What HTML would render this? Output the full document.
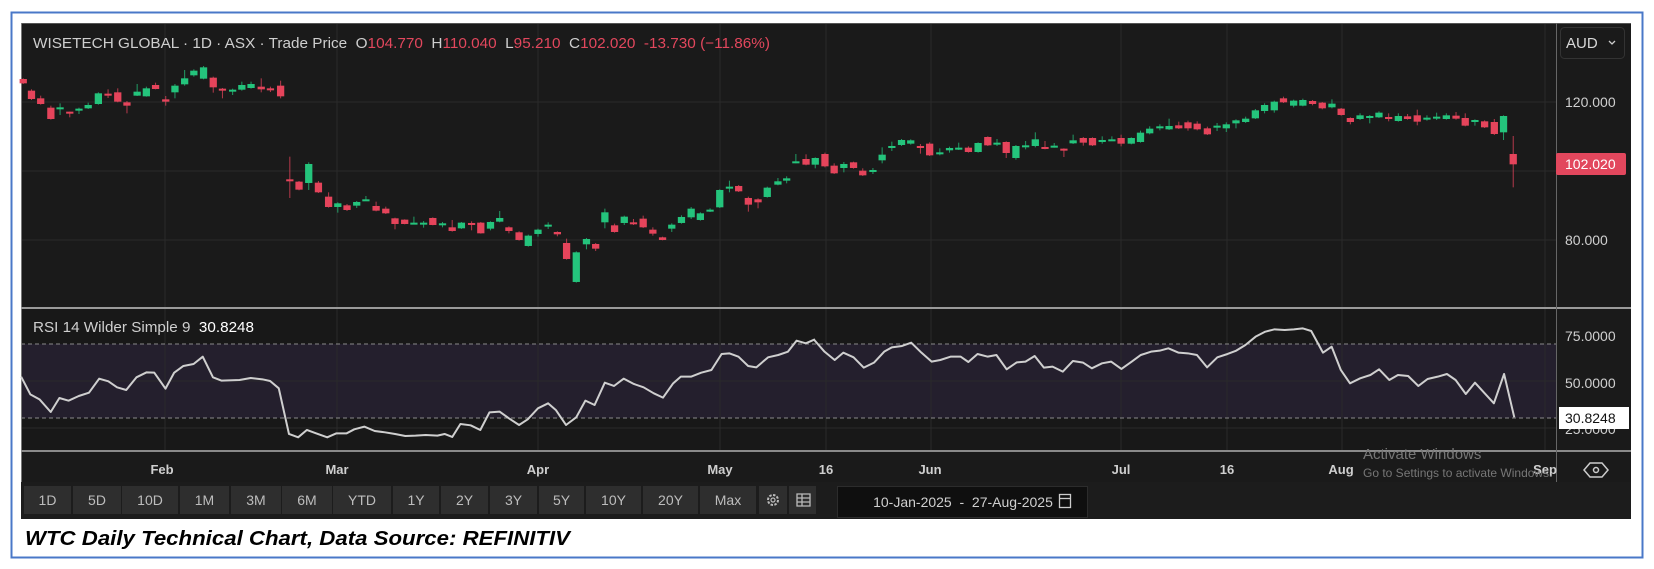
<!DOCTYPE html>
<html><head><meta charset="utf-8"><style>
html,body{margin:0;padding:0;background:#fff;width:1654px;height:569px;overflow:hidden}
svg{position:absolute;left:0;top:0}
text{font-family:"Liberation Sans",Arial,sans-serif}
</style></head><body>
<svg id="s" width="1654" height="569" xmlns="http://www.w3.org/2000/svg">
<rect x="11.5" y="12.5" width="1631" height="545" fill="#fff" stroke="#4a78c8" stroke-width="2"/>
<rect x="21" y="23" width="1610" height="496" fill="#1a1a1a"/>
<rect x="21" y="309" width="1535" height="142" fill="#181818"/>
<rect x="21" y="344" width="1535" height="74" fill="#241f2d"/>
<g stroke="#2a2a2a" stroke-width="1">
<line x1="21" y1="102" x2="1556" y2="102"/><line x1="21" y1="171" x2="1556" y2="171"/><line x1="21" y1="240" x2="1556" y2="240"/>
<line x1="21" y1="381" x2="1556" y2="381"/><line x1="21" y1="428" x2="1556" y2="428"/>
<line x1="165" y1="23" x2="165" y2="451"/><line x1="337" y1="23" x2="337" y2="451"/><line x1="538" y1="23" x2="538" y2="451"/>
<line x1="720" y1="23" x2="720" y2="451"/><line x1="826" y1="23" x2="826" y2="451"/><line x1="931" y1="23" x2="931" y2="451"/>
<line x1="1121" y1="23" x2="1121" y2="451"/><line x1="1227" y1="23" x2="1227" y2="451"/><line x1="1342" y1="23" x2="1342" y2="451"/><line x1="1545" y1="23" x2="1545" y2="451"/>
</g>
<g stroke="#8a8a8a" stroke-width="1" stroke-dasharray="4,3"><line x1="21" y1="344" x2="1556" y2="344"/><line x1="21" y1="418" x2="1556" y2="418"/></g>
<line x1="21" y1="23.5" x2="1631" y2="23.5" stroke="#555"/>
<line x1="21.5" y1="23" x2="21.5" y2="519" stroke="#777"/>
<rect x="21" y="307" width="1610" height="2" fill="#9a9a9a"/>
<rect x="21" y="450" width="1610" height="2" fill="#8a8a8a"/>
<line x1="1556.5" y1="23" x2="1556.5" y2="485" stroke="#666"/>
<g id="c4" transform="translate(15,60) scale(0.4847,0.3333)"></g>
<g id="c5" transform="translate(760,60) scale(0.4847,0.3333)"></g>
<g fill="none" stroke="#cfcfcf" stroke-width="2" stroke-linejoin="round">
<polyline vector-effect="non-scaling-stroke" transform="translate(15,300) scale(0.5102,0.3333)" points="12,230 30,283 48,298 70,336 87,294 105,302 125,288 145,278 165,236 183,244 200,262 218,270 238,232 258,217 273,218 295,266 312,218 330,198 350,192 368,170 388,232 405,242 440,240 462,234 485,238 500,243 517,265 537,402 555,412 572,390 590,400 612,412 630,400 650,400 665,388 685,380 705,393 725,397 745,402 765,408 785,407 805,405 828,407 842,402 857,411 873,372 893,376 912,390 930,337 950,335 968,355 988,375 1005,358 1025,325 1045,310 1060,330 1080,375 1100,352 1118,302 1136,315 1156,248 1174,258 1193,236 1213,252 1232,262 1252,280 1270,293 1290,250 1305,230 1325,230 1345,218 1365,210 1385,162 1400,160 1418,170 1437,198 1453,202 1476,172 1496,165 1515,155 1532,122 1550,130 1568,118"/>
<polyline vector-effect="non-scaling-stroke" transform="translate(800,300) scale(0.5102,0.3333)" points="28,120 48,155 68,180 85,158 105,172 125,203 145,188 165,155 180,142 200,138 218,128 238,158 258,185 275,180 295,170 315,170 330,186 348,162 368,170 385,165 405,208 425,187 442,185 460,168 478,203 495,200 515,215 535,183 555,188 572,205 592,190 610,185 630,207 650,185 668,165 688,155 705,152 722,145 742,158 760,160 778,165 798,202 818,172 838,162 855,152 873,135 893,110 912,95 930,88 950,90 968,88 985,85 1002,93 1025,158 1042,140 1060,210 1078,250 1098,235 1118,225 1135,208 1155,240 1172,225 1192,228 1212,258 1230,237 1250,230 1268,222 1285,240 1305,282 1323,248 1342,280 1360,310 1380,222 1400,352"/>
</g>
<text x="33" y="48" font-size="15" fill="#cfcfcf" textLength="737" lengthAdjust="spacingAndGlyphs">WISETECH GLOBAL · 1D · ASX · Trade Price&#160;&#160;O<tspan fill="#e2475d">104.770</tspan>&#160;&#160;H<tspan fill="#e2475d">110.040</tspan>&#160;&#160;L<tspan fill="#e2475d">95.210</tspan>&#160;&#160;C<tspan fill="#e2475d">102.020&#160;&#160;-13.730 (−11.86%)</tspan></text>
<text x="33" y="332" font-size="15" fill="#cfcfcf" textLength="221" lengthAdjust="spacingAndGlyphs">RSI 14 Wilder Simple 9&#160;&#160;<tspan fill="#fff">30.8248</tspan></text>
<rect x="1560.5" y="27.5" width="64" height="31" rx="4" fill="none" stroke="#333"/>
<text x="1566" y="48" font-size="15" fill="#d8d8d8">AUD</text>
<path d="M1609 41l3 3 3-3" stroke="#ccc" fill="none" stroke-width="1.3"/>
<g font-size="14" fill="#d0d0d0">
<text x="1565" y="107">120.000</text><text x="1565" y="245">80.000</text>
<text x="1565" y="341">75.0000</text><text x="1565" y="388">50.0000</text><text x="1565" y="434">25.0000</text>
</g>
<rect x="1556" y="153" width="70" height="22" rx="2" fill="#e2475d"/>
<text x="1565" y="169" font-size="14" fill="#fff">102.020</text>
<rect x="1559" y="407" width="70" height="22" fill="#fff"/>
<text x="1565" y="423" font-size="14" fill="#111">30.8248</text>
<g font-size="13" font-weight="bold" fill="#cfcfcf" text-anchor="middle">
<text x="162" y="474">Feb</text><text x="337" y="474">Mar</text><text x="538" y="474">Apr</text><text x="720" y="474">May</text><text x="826" y="474">16</text><text x="930" y="474">Jun</text><text x="1121" y="474">Jul</text><text x="1227" y="474">16</text><text x="1341" y="474">Aug</text><text x="1545" y="474">Sep</text>
</g>
<path d="M1590 463h12l6 7-6 7h-12l-6-7z" fill="none" stroke="#ccc" stroke-width="1.5"/><circle cx="1596" cy="470" r="2.5" fill="none" stroke="#ccc" stroke-width="1.5"/>
<text x="1363" y="459" font-size="15" fill="#777">Activate Windows</text>
<text x="1363" y="477" font-size="12" fill="#777">Go to Settings to activate Windows.</text>
<rect x="21" y="482" width="1610" height="37" fill="#1c1c1c"/>
<g id="tb" font-size="14" fill="#bdbdbd" text-anchor="middle"></g>
<rect x="837.5" y="486.5" width="250" height="31" fill="#0f0f0f" stroke="#2c2c2c"/>
<text x="963" y="507" font-size="14" fill="#cfcfcf" text-anchor="middle">10-Jan-2025&#160;&#160;-&#160;&#160;27-Aug-2025</text>
<rect x="1059.5" y="494.5" width="11" height="13" fill="none" stroke="#ccc" stroke-width="1.3"/><line x1="1059" y1="498.5" x2="1071" y2="498.5" stroke="#ccc" stroke-width="1.3"/>
<text x="25" y="545" font-size="20" font-weight="bold" font-style="italic" fill="#000" textLength="545" lengthAdjust="spacingAndGlyphs">WTC Daily Technical Chart, Data Source: REFINITIV</text>
</svg>
<script>
var NS="http://www.w3.org/2000/svg";
function mk(t,a,p){var e=document.createElementNS(NS,t);for(var k in a)e.setAttribute(k,a[k]);p.appendChild(e);return e;}
var G="#24c47c",R="#e5445b";
var c4=[["r",17,57,70,55,72],["r",34,92,117,88,120],["r",53,115,132,107,134],["r",74,143,177,137,179],["g",93,142,146,130,165],["r",113,155,158,155,172],["g",132,146,152,143,162],["g",151,135,145,128,147],["g",172,100,132,97,134],["r",192,101,104,88,114],["r",212,97,125,85,127],["r",231,127,137,123,160],["g",252,95,107,72,108],["g",271,85,109,80,110],["r",290,75,87,68,88],["r",311,118,125,108,137],["g",330,77,97,72,115],["g",350,55,73,30,77],["g",369,32,46,28,50],["g",389,22,56,18,58],["r",409,53,82,50,98],["r",428,86,90,84,115],["g",449,89,94,86,105],["g",468,75,89,65,92],["g",487,72,84,65,86],["r",508,80,88,55,97],["r",527,85,91,80,96],["r",548,77,109,62,115],["r",567,358,362,290,414],["r",586,365,389,363,391],["g",606,312,369,307,390],["r",626,368,397,363,399],["r",647,410,441,397,443],["g",666,430,441,427,458],["r",685,436,450,432,453],["g",705,426,437,423,444],["g",724,418,421,408,421],["r",745,438,452,425,454],["r",765,446,460,440,462],["r",784,475,492,473,508],["r",804,479,492,478,493],["g",823,488,490,470,492],["g",843,488,492,483,503],["r",862,474,495,472,496],["g",882,490,492,486,502],["r",902,502,513,480,515],["g",921,488,505,486,507],["r",942,489,495,484,511],["r",961,488,520,486,521],["g",981,486,506,484,511],["g",1000,474,485,453,487],["r",1019,502,513,499,520],["r",1040,517,540,514,542],["g",1059,527,558,524,560],["g",1079,509,522,506,530],["g",1100,494,500,487,507],["r",1119,516,523,514,529],["r",1138,549,597,536,599],["g",1158,577,666,574,668],["g",1179,537,553,534,568],["r",1198,552,566,549,573],["g",1217,457,487,446,505],["r",1237,496,516,491,518],["g",1257,470,489,467,495],["r",1276,487,490,477,495],["r",1296,476,502,467,504],["r",1316,509,521,502,527],["r",1336,532,540,530,541],["g",1355,494,506,490,516],["g",1375,471,489,466,491],["g",1395,446,472,441,477],["g",1414,460,480,457,482],["g",1434,449,452,445,456],["g",1454,390,442,388,444],["g",1474,380,386,362,397],["r",1493,378,394,375,396],["r",1513,414,434,410,455],["r",1533,418,427,415,445],["g",1552,383,411,380,413]];
var c5=[["g",37,364,374,354,376],["g",55,355,362,349,370],["g",74,304,307,282,310],["r",95,297,314,283,316],["g",114,294,314,292,325],["r",134,282,319,278,322],["r",153,317,340,310,342],["g",173,312,324,306,337],["r",193,307,324,305,326],["r",212,332,346,325,348],["g",233,330,334,324,342],["g",252,284,301,262,310],["g",272,258,264,245,273],["g",292,240,255,237,258],["g",311,241,251,238,254],["r",331,258,260,252,281],["r",350,251,286,247,288],["g",371,277,283,265,286],["g",391,264,271,260,278],["g",410,263,266,248,270],["r",430,263,276,259,278],["g",450,249,276,247,278],["r",470,231,256,229,258],["g",489,248,250,237,258],["r",508,246,279,244,294],["g",528,258,294,255,299],["g",548,256,258,243,268],["g",568,238,258,217,262],["r",588,261,266,243,268],["g",607,257,261,249,263],["r",627,266,268,265,291],["g",646,241,250,224,252],["r",667,234,248,231,257],["r",686,234,256,232,258],["g",706,240,243,229,251],["g",726,238,241,229,243],["r",745,234,251,224,259],["g",766,234,251,232,253],["g",785,218,246,212,248],["g",804,206,220,199,223],["g",825,199,205,193,211],["g",844,198,208,176,210],["r",864,196,205,185,207],["r",883,187,205,182,212],["r",902,191,208,184,211],["r",923,205,223,200,225],["g",943,197,200,189,213],["g",962,193,205,187,216],["g",982,181,190,178,205],["g",1002,176,186,170,189],["g",1022,151,175,147,177],["g",1041,135,153,130,160],["g",1061,125,151,122,158],["r",1080,115,127,110,129],["g",1101,122,137,119,142],["g",1120,120,137,116,139],["r",1140,123,132,120,136],["r",1160,128,145,126,148],["g",1180,131,142,118,145],["r",1199,146,165,144,167],["r",1218,174,186,172,193],["g",1238,166,177,160,180],["g",1258,168,173,165,190],["g",1277,158,172,154,174],["r",1297,171,177,160,184],["g",1317,168,183,160,185],["r",1336,169,177,162,179],["r",1356,166,185,149,196],["g",1376,173,179,166,182],["g",1396,170,173,158,180],["g",1416,166,177,160,179],["r",1436,167,176,156,179],["r",1455,174,197,160,199],["g",1475,180,182,178,197],["r",1495,184,202,181,204],["r",1515,186,222,177,225],["g",1534,168,217,166,240],["r",1554,282,313,228,382]];
function draw(id,arr){var g=document.getElementById(id);arr.forEach(function(c){var col=c[0]=="g"?G:R;
mk("line",{x1:c[1],x2:c[1],y1:c[4],y2:c[5],stroke:col,"stroke-width":2.1,opacity:0.75},g);
var h=Math.max(c[3]-c[2],6);mk("rect",{x:c[1]-7.5,y:c[2],width:15,height:h,fill:col},g);});}
draw("c4",c4);draw("c5",c5);
var tb=document.getElementById("tb");
var b=[["1D",24,71],["5D",73,121],["10D",122,178],["1M",180,229],["3M",231,281],["6M",282,332],["YTD",333,391],["1Y",393,439],["2Y",441,488],["3Y",490,537],["5Y",539,584],["10Y",586,641],["20Y",643,698],["Max",700,756],["",759,787],["",789,816]];
b.forEach(function(x){mk("rect",{x:x[1],y:486,width:x[2]-x[1],height:28,fill:"#2e2e2e"},tb);if(x[0]){var t=mk("text",{x:(x[1]+x[2])/2,y:505},tb);t.textContent=x[0];}});
mk("circle",{cx:773,cy:500,r:5,fill:"none",stroke:"#bbb","stroke-width":2,"stroke-dasharray":"2.5,1.4"},tb);
mk("circle",{cx:773,cy:500,r:2,fill:"none",stroke:"#bbb","stroke-width":1.2},tb);
mk("path",{d:"M797 494h13v12h-13zM797 498h13M797 502h13M802 494v12",fill:"none",stroke:"#bbb","stroke-width":1.3},tb);
</script>
</body></html>
